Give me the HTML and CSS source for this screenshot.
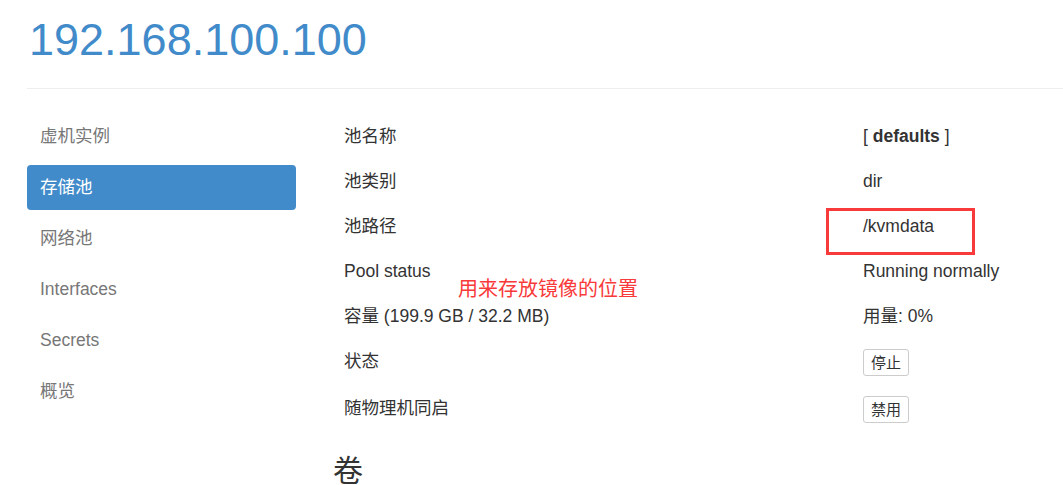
FILE: index.html
```html
<!DOCTYPE html>
<html lang="zh-CN">
<head>
<meta charset="utf-8">
<title>192.168.100.100</title>
<link rel="stylesheet" href="styles.css">
</head>
<body>
<div class="page">
  <h1 class="host">192.168.100.100</h1>
  <hr class="rule">
  <div class="layout">
    <ul class="side-nav">
      <li class="nav-item">虚机实例</li>
      <li class="nav-item active">存储池</li>
      <li class="nav-item">网络池</li>
      <li class="nav-item">Interfaces</li>
      <li class="nav-item">Secrets</li>
      <li class="nav-item">概览</li>
    </ul>
    <div class="main">
      <table class="info">
        <tr><td class="label">池名称</td><td class="value">[ <strong>defaults</strong> ]</td></tr>
        <tr><td class="label">池类别</td><td class="value">dir</td></tr>
        <tr><td class="label">池路径</td><td class="value">/kvmdata</td></tr>
        <tr><td class="label">Pool status</td><td class="value">Running normally</td></tr>
        <tr><td class="label">容量 (199.9 GB / 32.2 MB)</td><td class="value">用量: 0%</td></tr>
        <tr><td class="label">状态</td><td class="value"><button class="btn">停止</button></td></tr>
        <tr><td class="label">随物理机同启</td><td class="value"><button class="btn">禁用</button></td></tr>
      </table>
      <h2 class="section">卷</h2>
    </div>
  </div>
  <div class="mark-box"></div>
  <div class="mark-note">用来存放镜像的位置</div>
</div>
</body>
</html>
```

FILE: styles.css
```css
* { box-sizing: border-box; }
html, body { margin: 0; padding: 0; background: #fff; }
body {
  font-family: "Liberation Sans", Arial, "Noto Sans CJK SC", sans-serif;
  font-size: 17.5px;
  line-height: 25px;
  color: #333;
  overflow: hidden;
  height: 485px;
}
.page {
  position: relative;
  padding: 15px 0 0 27px;
}
.host {
  margin: 0 0 0 2px;
  font-size: 45px;
  line-height: 49px;
  font-weight: normal;
  color: #428bca;
}
.rule {
  margin: 24px 0 0 0;
  border: 0;
  border-top: 1px solid #eee;
  height: 0;
}
.layout {
  display: flex;
  gap: 37px;
  margin-top: 24px;
}
.side-nav {
  list-style: none;
  margin: 1px 0 0 0;
  padding: 0;
  width: 269px;
  flex: none;
  display: flex;
  flex-direction: column;
  gap: 6px;
}
.nav-item {
  height: 45px;
  padding: 10px 13px;
  border-radius: 4px;
  color: #777;
}
.nav-item.active {
  background: #428bca;
  color: #fff;
}
.main { flex: 1; }
.info {
  border-collapse: collapse;
  width: 100%;
}
.info td {
  padding: 10px 10px;
  vertical-align: top;
  line-height: 25px;
}
.label { width: 520px; padding-left: 11px !important; }
.info tr:first-child td { padding-top: 11px; }
.value strong { font-weight: bold; }
.btn {
  font-family: "Liberation Sans", Arial, "Noto Sans CJK SC", sans-serif;
  font-size: 15px;
  line-height: 19px;
  height: 27px;
  padding: 3px 7px;
  background: #fff;
  color: #333;
  border: 1px solid #ccc;
  border-radius: 3px;
  margin: 0;
  display: block;
}
.section {
  margin: 21px 0 0 0;
  font-size: 30px;
  line-height: 33px;
  font-weight: normal;
  color: #333;
}
.mark-box {
  position: absolute;
  left: 826px;
  top: 208px;
  width: 149px;
  height: 47px;
  border: 3px solid #f93a3a;
}
.mark-note {
  position: absolute;
  left: 458px;
  top: 276px;
  font-size: 20px;
  line-height: 26px;
  color: #f93a3a;
}
```
